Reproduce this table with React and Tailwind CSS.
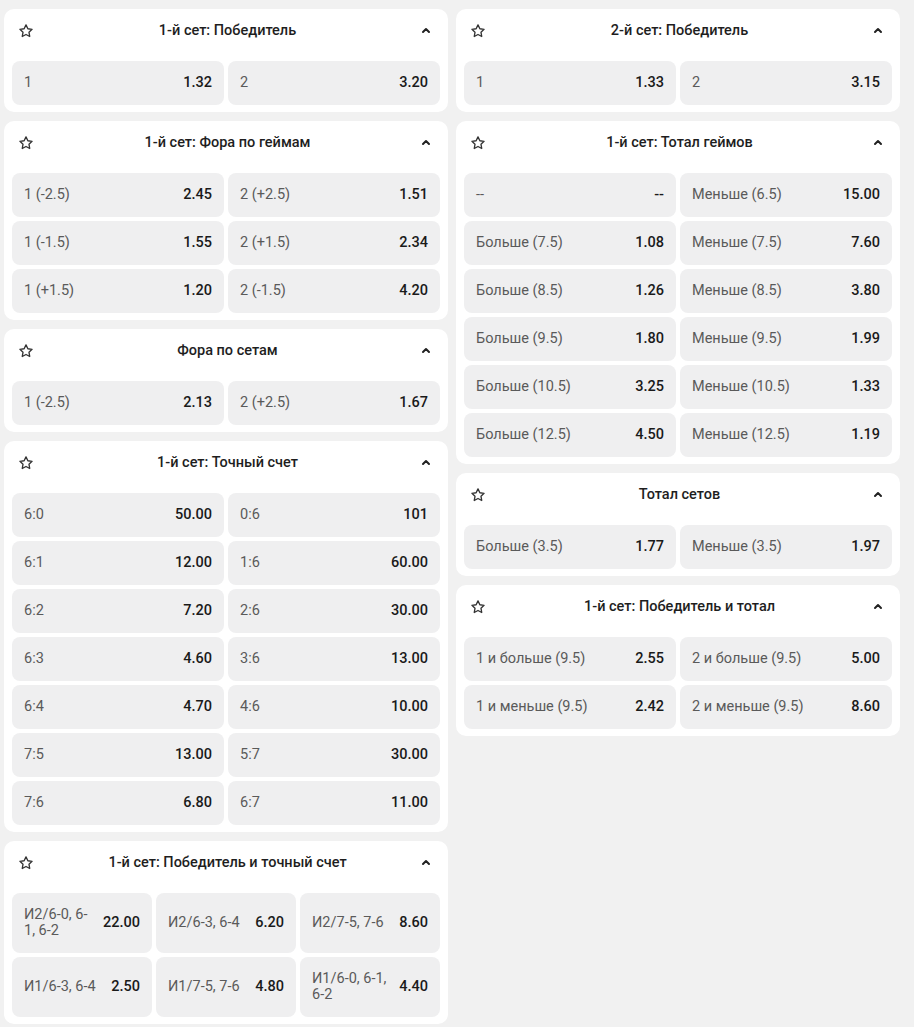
import React from "react";

const left = [
  {
    title: "1-й сет: Победитель",
    rows: [[["1", "1.32"], ["2", "3.20"]]],
  },
  {
    title: "1-й сет: Фора по геймам",
    rows: [
      [["1 (-2.5)", "2.45"], ["2 (+2.5)", "1.51"]],
      [["1 (-1.5)", "1.55"], ["2 (+1.5)", "2.34"]],
      [["1 (+1.5)", "1.20"], ["2 (-1.5)", "4.20"]],
    ],
  },
  {
    title: "Фора по сетам",
    rows: [[["1 (-2.5)", "2.13"], ["2 (+2.5)", "1.67"]]],
  },
  {
    title: "1-й сет: Точный счет",
    rows: [
      [["6:0", "50.00"], ["0:6", "101"]],
      [["6:1", "12.00"], ["1:6", "60.00"]],
      [["6:2", "7.20"], ["2:6", "30.00"]],
      [["6:3", "4.60"], ["3:6", "13.00"]],
      [["6:4", "4.70"], ["4:6", "10.00"]],
      [["7:5", "13.00"], ["5:7", "30.00"]],
      [["7:6", "6.80"], ["6:7", "11.00"]],
    ],
  },
  {
    title: "1-й сет: Победитель и точный счет",
    three: true,
    rows: [
      [["И2/6-0, 6-1, 6-2", "22.00"], ["И2/6-3, 6-4", "6.20"], ["И2/7-5, 7-6", "8.60"]],
      [["И1/6-3, 6-4", "2.50"], ["И1/7-5, 7-6", "4.80"], ["И1/6-0, 6-1, 6-2", "4.40"]],
    ],
  },
];

const right = [
  {
    title: "2-й сет: Победитель",
    rows: [[["1", "1.33"], ["2", "3.15"]]],
  },
  {
    title: "1-й сет: Тотал геймов",
    rows: [
      [["--", "--"], ["Меньше (6.5)", "15.00"]],
      [["Больше (7.5)", "1.08"], ["Меньше (7.5)", "7.60"]],
      [["Больше (8.5)", "1.26"], ["Меньше (8.5)", "3.80"]],
      [["Больше (9.5)", "1.80"], ["Меньше (9.5)", "1.99"]],
      [["Больше (10.5)", "3.25"], ["Меньше (10.5)", "1.33"]],
      [["Больше (12.5)", "4.50"], ["Меньше (12.5)", "1.19"]],
    ],
  },
  {
    title: "Тотал сетов",
    rows: [[["Больше (3.5)", "1.77"], ["Меньше (3.5)", "1.97"]]],
  },
  {
    title: "1-й сет: Победитель и тотал",
    rows: [
      [["1 и больше (9.5)", "2.55"], ["2 и больше (9.5)", "5.00"]],
      [["1 и меньше (9.5)", "2.42"], ["2 и меньше (9.5)", "8.60"]],
    ],
  },
];

function Star() {
  return (
    <svg width="16" height="16" viewBox="0 0 24 24" fill="none" stroke="#333" strokeWidth="2" strokeLinejoin="round">
      <path d="M12 2.8l2.8 5.8 6.3.9-4.6 4.4 1.1 6.3L12 17.2l-5.6 3 1.1-6.3-4.6-4.4 6.3-.9z" />
    </svg>
  );
}

function Chevron() {
  return (
    <svg width="10" height="7" viewBox="0 0 10 7" fill="none" stroke="#222" strokeWidth="2" strokeLinecap="round" strokeLinejoin="round">
      <path d="M2 5l3-3 3 3" />
    </svg>
  );
}

function Cell({ label, value, tall }) {
  return (
    <div
      className={`flex items-center justify-between gap-3 rounded-[8px] bg-[#efeff0] px-3 ${tall ? "h-[60px]" : "h-[44px]"}`}
    >
      <span className="min-w-0 text-[14.5px] leading-[16px] text-[#5a5a5a]">{label}</span>
      <span className="shrink-0 text-[14.5px] font-medium text-[#1a1a1a]">{value}</span>
    </div>
  );
}

function Market({ market }) {
  return (
    <div className="rounded-[10px] bg-white px-2 pb-[7px]">
      <div className="mb-[9px] flex h-[43px] items-center pl-[6px] pr-[9px]">
        <Star />
        <div className="flex-1 pt-[1px] text-center text-[14.5px] font-medium text-[#1e1e1e]">{market.title}</div>
        <Chevron />
      </div>
      <div className="flex flex-col gap-1">
        {market.rows.map((row, i) => (
          <div key={i} className={`grid gap-1 ${market.three ? "grid-cols-3" : "grid-cols-2"}`}>
            {row.map(([l, v], j) => (
              <Cell key={j} label={l} value={v} tall={market.three} />
            ))}
          </div>
        ))}
      </div>
    </div>
  );
}

export default function App() {
  return (
    <div
      className="flex min-h-screen gap-2 bg-[#f1f1f1] pl-[4px] pt-[9px]"
      style={{ fontFamily: "Roboto, 'Noto Sans', sans-serif" }}
    >
      <div className="flex w-[444px] flex-col gap-[9px]">
        {left.map((m, i) => (
          <Market key={i} market={m} />
        ))}
      </div>
      <div className="flex w-[444px] flex-col gap-[9px]">
        {right.map((m, i) => (
          <Market key={i} market={m} />
        ))}
      </div>
    </div>
  );
}
